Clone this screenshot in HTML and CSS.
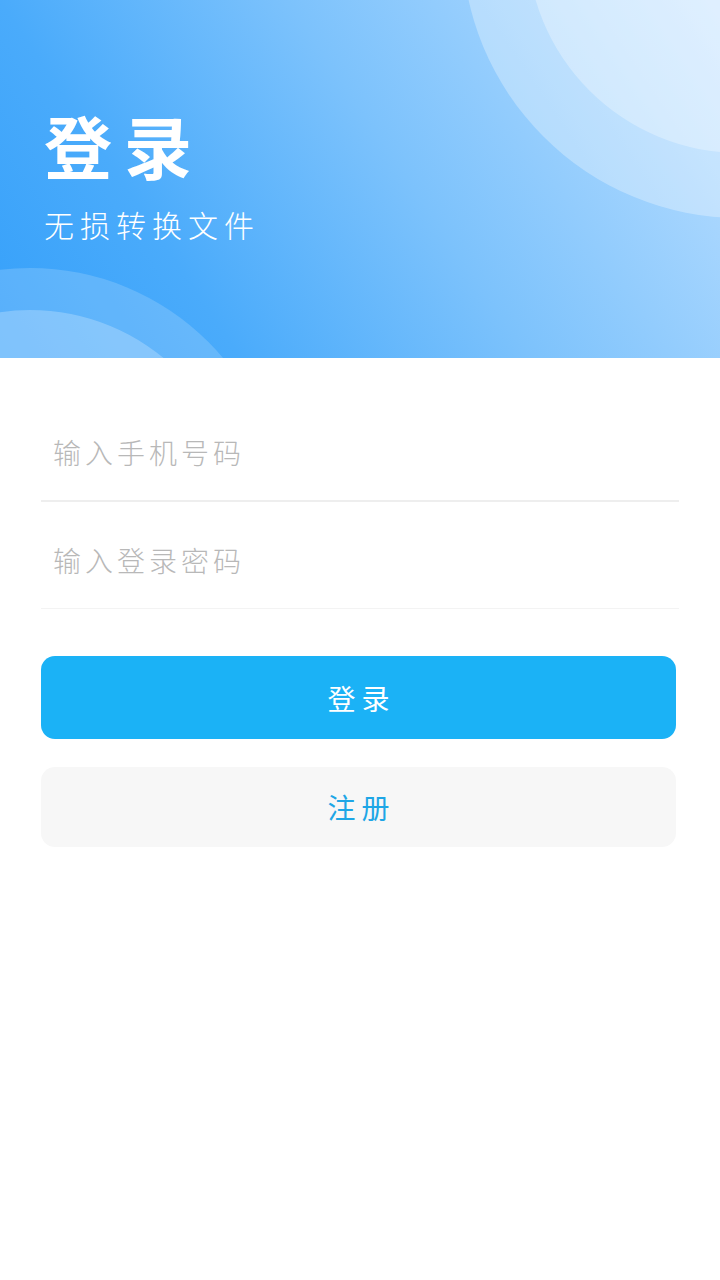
FILE: index.html
```html
<!DOCTYPE html>
<html lang="zh-CN">
<head>
<meta charset="utf-8">
<title>登录</title>
<link rel="stylesheet" href="styles.css">
</head>
<body>
<div class="page">
  <header class="hero">
    <span class="blob blob-tr-outer"></span>
    <span class="blob blob-tr-inner"></span>
    <span class="blob blob-bl-outer"></span>
    <span class="blob blob-bl-inner"></span>
    <h1 class="hero-title">登录</h1>
    <p class="hero-sub">无损转换文件</p>
  </header>
  <main class="form">
    <div class="field field-first">
      <input class="field-input" type="tel" placeholder="输入手机号码">
    </div>
    <div class="field field-second">
      <input class="field-input" type="password" placeholder="输入登录密码">
    </div>
    <button class="btn btn-primary" type="button">登录</button>
    <button class="btn btn-secondary" type="button">注册</button>
  </main>
</div>
</body>
</html>
```

FILE: styles.css
```css
html, body {
  margin: 0;
  padding: 0;
  background: #ffffff;
}

body {
  width: 720px;
  height: 1280px;
  font-family: "Noto Sans CJK SC", "Noto Sans", sans-serif;
}

.page {
  display: flex;
  flex-direction: column;
}

.hero {
  position: relative;
  overflow: hidden;
  height: 358px;
  box-sizing: border-box;
  padding: 111px 0 0 44px;
  background: linear-gradient(56deg, #35a0fa 0%, #4aabfb 25%, #7cc2fc 55%, #a8d6fe 85%, #bfe0ff 100%);
}

.blob {
  position: absolute;
  border-radius: 50%;
}

.blob-tr-outer {
  left: 462px;
  top: -338px;
  width: 556px;
  height: 556px;
  background: rgba(255, 255, 255, 0.3);
}

.blob-tr-inner {
  left: 527px;
  top: -273px;
  width: 426px;
  height: 426px;
  background: rgba(255, 255, 255, 0.3);
}

.blob-bl-outer {
  left: -222px;
  top: 268px;
  width: 504px;
  height: 504px;
  background: rgba(255, 255, 255, 0.17);
}

.blob-bl-inner {
  left: -180px;
  top: 310px;
  width: 420px;
  height: 420px;
  background: rgba(255, 255, 255, 0.24);
}

.hero-title {
  position: relative;
  margin: 0;
  font-size: 68px;
  line-height: 68px;
  font-weight: 700;
  letter-spacing: 12px;
  color: #ffffff;
}

.hero-sub {
  position: relative;
  margin: 30px 0 0;
  font-size: 30px;
  line-height: 30px;
  font-weight: 300;
  letter-spacing: 6px;
  color: #ffffff;
}

.form {
  display: flex;
  flex-direction: column;
  padding: 36px 41px 0 41px;
}

.field {
  display: flex;
}

.field-first {
  border-bottom: 2px solid #eeeeee;
}

.field-second {
  border-bottom: 1px solid #f3f3f3;
}

.field-input {
  flex: 1;
  box-sizing: border-box;
  height: 106px;
  padding: 10px 12px 0;
  border: 0;
  outline: none;
  background: transparent;
  font-family: "Noto Sans CJK SC", "Noto Sans", sans-serif;
  font-size: 28px;
  font-weight: 300;
  letter-spacing: 4px;
  color: #333333;
}

.field-input::placeholder {
  color: #b8b8b8;
}

.btn {
  box-sizing: border-box;
  margin-right: 3px;
  border: 0;
  border-radius: 14px;
  padding: 0 0 0 6px;
  font-family: "Noto Sans CJK SC", "Noto Sans", sans-serif;
  font-size: 28px;
  letter-spacing: 6px;
  cursor: pointer;
}

.btn-primary {
  margin-top: 47px;
  height: 83px;
  background: #1bb2f6;
  color: #ffffff;
}

.btn-secondary {
  margin-top: 28px;
  height: 80px;
  background: #f7f7f7;
  color: #1ea6e6;
}
```
